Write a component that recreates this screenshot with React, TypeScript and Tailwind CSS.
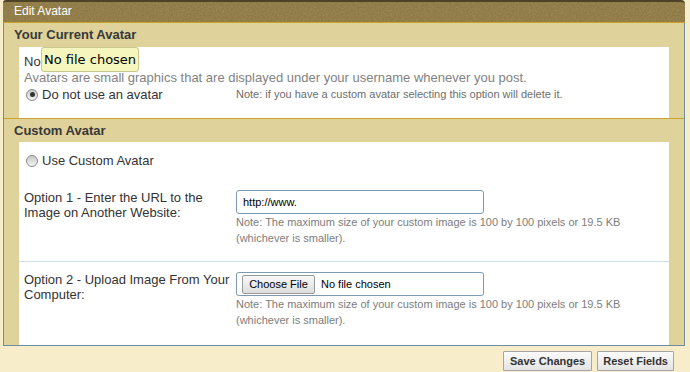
import React from "react";

function Radio({ checked }: { checked?: boolean }) {
  return (
    <span className="inline-flex w-[12px] h-[12px] rounded-full border border-[#8a8a8a] bg-[linear-gradient(#c8c8c8,#f4f4f4)] items-center justify-center shrink-0">
      {checked ? <span className="w-[5px] h-[5px] rounded-full bg-[#333]" /> : null}
    </span>
  );
}

function Note({ children }: { children: React.ReactNode }) {
  return <div className="text-[11px] leading-[16px] text-[#7d7d7d]">{children}</div>;
}

export default function App() {
  return (
    <div className="w-[690px] h-[372px] bg-[#f8edca] overflow-hidden font-['Liberation_Sans',Arial,sans-serif] text-[#3a3a3a]">
      <div className="ml-[3px] w-[682px]">
        {/* title bar */}
        <div className="relative h-[23px] rounded-tl-[3px] rounded-tr-[4px] border-t-2 border-[#4e4229] border-b border-b-[#c9a42c] bg-[#8e7944] overflow-hidden">
          <svg className="absolute inset-0" width="682" height="22">
            <filter id="n">
              <feTurbulence type="fractalNoise" baseFrequency="0.6" numOctaves="2" seed="3" />
              <feColorMatrix type="matrix" values="0 0 0 0 0.36  0 0 0 0 0.29  0 0 0 0 0.13  0 0 0 1.1 -0.35" />
            </filter>
            <rect width="682" height="22" filter="url(#n)" />
          </svg>
          <div className="relative pl-[11px] text-[12px] leading-[19px] text-white">Edit Avatar</div>
        </div>
        {/* body */}
        <div className="border-x border-b border-[#6e8da3] bg-[#dfd29b]">
          <div className="h-[24px] pl-[10px] flex items-center text-[13px] font-bold text-[#383838]">Your Current Avatar</div>
          <div className="mx-[15px] h-[71px] bg-white pt-[7px] relative">
            <div className="pl-[5px] text-[13px] leading-[16px] text-[#333]">No avatar specified.</div>
            <div className="absolute left-[22px] top-0 h-[25px] px-[2px] rounded-[3px] border border-[#c9c98f] bg-[#f5f6bd] text-[13px] leading-[23px] text-black font-['DejaVu_Sans',sans-serif]">
              No file chosen
            </div>
            <div className="pl-[5px] text-[13px] leading-[16px] text-[#828282]">
              Avatars are small graphics that are displayed under your username whenever you post.
            </div>
            <div className="flex items-center h-[17px]">
              <div className="w-[217px] pl-[7px] flex items-center gap-[4px] text-[13px] text-[#333]">
                <Radio checked />
                <span>Do not use an avatar</span>
              </div>
              <div className="text-[11px] text-[#6d6d6d]">Note: if you have a custom avatar selecting this option will delete it.</div>
            </div>
          </div>
          <div className="h-px bg-[#c9a42c]" />
          <div className="h-[23px] pl-[10px] flex items-center text-[13px] font-bold text-[#383838]">Custom Avatar</div>
          <div className="mx-[15px] h-[203px] bg-white">
            <div className="h-[38px] pl-[7px] flex items-center gap-[4px] text-[13px] text-[#333]">
              <Radio />
              <span>Use Custom Avatar</span>
            </div>
            <div className="flex pt-[10px] h-[82px] border-b border-[#cfdde8]">
              <div className="w-[217px] pl-[5px] pr-[4px] text-[13px] leading-[15px] text-[#333]">
                Option 1 - Enter the URL to the Image on Another Website:
              </div>
              <div>
                <div className="w-[248px] h-[24px] rounded-[3px] border border-[#7e99ae] flex items-center pl-[6px] text-[11px] text-black">
                  http://www.
                </div>
                <Note>
                  Note: The maximum size of your custom image is 100 by 100 pixels or 19.5 KB
                  <br />
                  (whichever is smaller).
                </Note>
              </div>
            </div>
            <div className="flex pt-[10px]">
              <div className="w-[217px] pl-[5px] pr-[2px] text-[13px] leading-[15px] text-[#333]">
                Option 2 - Upload Image From Your Computer:
              </div>
              <div>
                <div className="w-[248px] h-[24px] rounded-[3px] border border-[#7e99ae] flex items-center pl-[5px] gap-[6px] text-[11px] text-black">
                  <span className="h-[19px] w-[73px] flex items-center justify-center rounded-[2px] border border-[#9a9a9a] bg-[linear-gradient(#f8f8f8,#dedede)]">
                    Choose File
                  </span>
                  <span>No file chosen</span>
                </div>
                <Note>
                  Note: The maximum size of your custom image is 100 by 100 pixels or 19.5 KB
                  <br />
                  (whichever is smaller).
                </Note>
              </div>
            </div>
          </div>
        </div>
      </div>
      <div className="flex justify-end gap-[5px] pr-[16px] mt-[5px]">
        <button className="h-[20px] px-[6px] border border-[#a5a5a5] rounded-[1px] bg-[linear-gradient(#fbfbfb,#e4e4e4)] text-[11px] font-bold text-[#333]">
          Save Changes
        </button>
        <button className="h-[20px] px-[5px] border border-[#a5a5a5] rounded-[1px] bg-[linear-gradient(#fbfbfb,#e4e4e4)] text-[11px] font-bold text-[#333]">
          Reset Fields
        </button>
      </div>
    </div>
  );
}
